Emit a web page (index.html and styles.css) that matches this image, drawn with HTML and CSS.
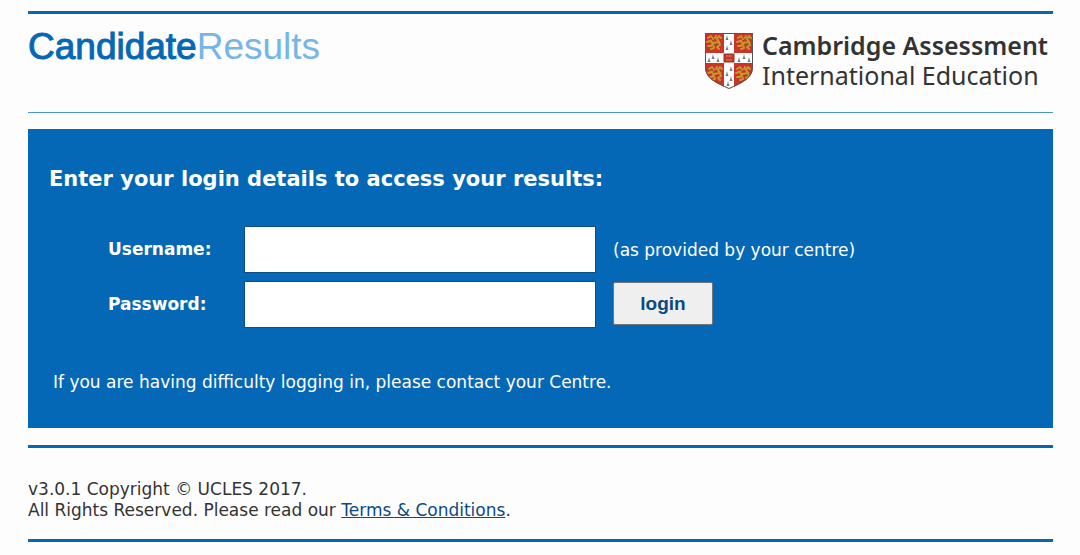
FILE: index.html
```html
<!DOCTYPE html>
<html lang="en">
<head>
<meta charset="UTF-8">
<meta name="viewport" content="width=device-width, initial-scale=1.0">
<link rel="stylesheet" href="styles.css">
<title>Candidate Results</title>
</head>
<body>
<div class="container">
    <header class="header">
        <h1 class="site-title"><span class="title-main">Candidate</span><span class="title-sub">Results</span></h1>
        <div class="logo">
            <svg class="shield" viewBox="0 0 48 56" aria-hidden="true">
                <defs>
                    <clipPath id="shieldClip">
                        <path d="M0 0H48V34C48 45 38 50 24 56C10 50 0 45 0 34Z"/>
                    </clipPath>
                    <g id="lion" fill="none" stroke="#c9982a" stroke-width="2" stroke-linecap="round" stroke-linejoin="round">
                        <path d="M3 5L6 3L8 6L5 8L8 10L14 9L15 12L12 14L14 16"/>
                        <path d="M8 10L6 13L3 13M8 11L9 15L6 16M5 8L2 9"/>
                        <path d="M14 9L12 6L14 3L16 5M11 3L10 5"/>
                        <path d="M6 5L7 7M9 12L12 11M4 15L3 17" stroke="#7c5a1c" stroke-width="1"/>
                    </g>
                    <path id="ermine" d="M0 -2L0.7 1L1.5 3H-1.5L-0.7 1Z" fill="#777"/>
                </defs>
                <g clip-path="url(#shieldClip)">
                    <rect width="48" height="56" fill="#cc332b"/>
                    <use href="#lion" x="0" y="0"/>
                    <use href="#lion" x="30" y="0"/>
                    <use href="#lion" x="1" y="31"/>
                    <use href="#lion" x="29" y="31"/>
                    <path d="M19 0H29V20H48V30H29V56H19V30H0V20H19Z" fill="#fff"/>
                    <use href="#ermine" x="22" y="4"/>
                    <use href="#ermine" x="26" y="9"/>
                    <use href="#ermine" x="22" y="14"/>
                    <use href="#ermine" x="4" y="26"/>
                    <use href="#ermine" x="8" y="23"/>
                    <use href="#ermine" x="13" y="26"/>
                    <use href="#ermine" x="34" y="26"/>
                    <use href="#ermine" x="39" y="23"/>
                    <use href="#ermine" x="44" y="26"/>
                    <use href="#ermine" x="26" y="35"/>
                    <use href="#ermine" x="22" y="40"/>
                    <use href="#ermine" x="26" y="45"/>
                    <use href="#ermine" x="23" y="50"/>
                    <rect x="19" y="21" width="10" height="8" fill="#c6352b" stroke="#8a3a20"/>
                    <path d="M21 23H27M21 27H27" stroke="#d98a30" stroke-width="1"/>
                </g>
                <path d="M0.5 0.5H47.5V34C47.5 45 38 49 24 55.5C10 49 0.5 45 0.5 34Z" fill="none" stroke="#555" stroke-width="1"/>
            </svg>
            <div class="logo-text">
                <strong>Cambridge Assessment</strong>
                <span>International Education</span>
            </div>
        </div>
    </header>
    <main class="login-panel">
        <h2>Enter your login details to access your results:</h2>
        <form class="login-form">
            <label for="username">Username:</label>
            <input type="text" id="username" name="username">
            <span class="hint">(as provided by your centre)</span>
            <label for="password">Password:</label>
            <input type="password" id="password" name="password">
            <button type="submit">login</button>
        </form>
        <p class="help">If you are having difficulty logging in, please contact your Centre.</p>
    </main>
    <footer class="footer">
        v3.0.1 Copyright © UCLES 2017.<br>
        All Rights Reserved. Please read our <a href="#">Terms &amp; Conditions</a>.
    </footer>
</div>
</body>
</html>
```
FILE: styles.css
```css
* {
    box-sizing: border-box;
}

body {
    font-family: Verdana, "DejaVu Sans", sans-serif;
    font-size: 17px;
    margin: 0;
    background-color: #fdfdfd;
    color: #333;
}

.container {
    margin: 11px 27px 0 28px;
}

.header {
    display: flex;
    justify-content: space-between;
    align-items: flex-start;
    height: 102px;
    padding: 12px 5px 0 0;
    border-top: 3px solid #0468b6;
    border-bottom: 1px solid #4a95d2;
}

.site-title {
    margin: 0;
    font-family: Arial, "Liberation Sans", sans-serif;
    font-size: 37px;
    font-weight: normal;
    line-height: 42px;
}

.title-main {
    color: #0468b6;
    -webkit-text-stroke: 1px #0468b6;
}

.title-sub {
    color: #76b5e6;
}

.logo {
    display: flex;
    gap: 9px;
    padding-top: 7px;
}

.shield {
    width: 48px;
    height: 56px;
}

.logo-text {
    display: flex;
    flex-direction: column;
    font-family: "Noto Sans", sans-serif;
    font-size: 25px;
    line-height: 30px;
    margin-top: -3px;
    color: #333;
}

.logo-text strong {
    font-weight: 600;
}

.login-panel {
    margin: 16px 0 17px;
    padding: 35px 21px;
    background-color: #0468b6;
    color: #fff;
}

.login-panel h2 {
    margin: 0 0 32px;
    font-size: 21px;
    line-height: 30px;
}

.login-form {
    display: grid;
    grid-template-columns: 136px 352px auto;
    justify-content: start;
    align-items: center;
    row-gap: 8px;
    padding-left: 59px;
}

.login-form label {
    font-weight: bold;
    padding-bottom: 2px;
}

.login-form input {
    height: 47px;
    padding: 0 10px;
    border: 1px solid #0b4f86;
    background-color: #fff;
    font-size: 18px;
}

.hint,
.login-form button {
    margin-left: 17px;
}

.login-form button {
    width: 100px;
    height: 43px;
    margin-bottom: 2px;
    border: 1px solid #767676;
    border-radius: 2px;
    background-color: #efefef;
    color: #0b4a80;
    font-family: Arial, "Liberation Sans", sans-serif;
    font-size: 19px;
    font-weight: bold;
    cursor: pointer;
}

.login-form button:hover {
    background-color: #e0e0e0;
}

.help {
    margin: 44px 4px 0;
    line-height: 21px;
}

.footer {
    padding: 31px 0 18px;
    border-top: 3px solid #0468b6;
    border-bottom: 3px solid #0468b6;
    line-height: 21px;
}

.footer a {
    color: #0b4a80;
}
```
